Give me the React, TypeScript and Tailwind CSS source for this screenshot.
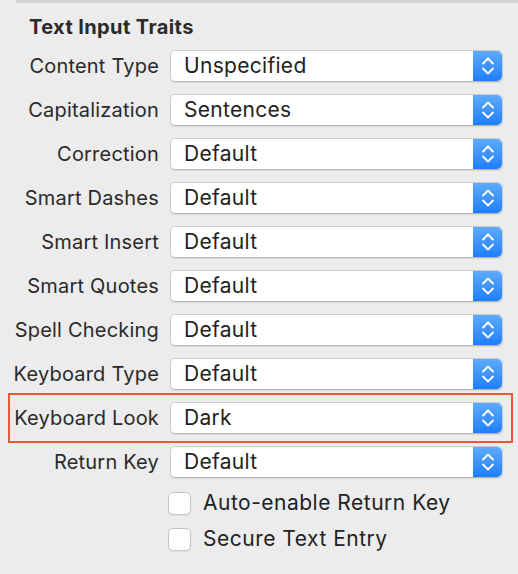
import React from 'react'

const rows: { label: string; value: string; marked?: boolean }[] = [
  { label: 'Content Type', value: 'Unspecified' },
  { label: 'Capitalization', value: 'Sentences' },
  { label: 'Correction', value: 'Default' },
  { label: 'Smart Dashes', value: 'Default' },
  { label: 'Smart Insert', value: 'Default' },
  { label: 'Smart Quotes', value: 'Default' },
  { label: 'Spell Checking', value: 'Default' },
  { label: 'Keyboard Type', value: 'Default' },
  { label: 'Keyboard Look', value: 'Dark', marked: true },
  { label: 'Return Key', value: 'Default' },
]

function Stepper() {
  return (
    <div className="w-[29px] h-full rounded-r-[5px] bg-gradient-to-b from-[#5eaafc] to-[#1b7ff9] flex items-center justify-center">
      <svg width="16" height="22" viewBox="0 0 16 22" fill="none">
        <path d="M3 8.5 L8 3.5 L13 8.5" stroke="white" strokeWidth="1.8" strokeLinecap="round" strokeLinejoin="round" />
        <path d="M3 13.5 L8 18.5 L13 13.5" stroke="white" strokeWidth="1.8" strokeLinecap="round" strokeLinejoin="round" />
      </svg>
    </div>
  )
}

function PopUp({ value }: { value: string }) {
  return (
    <div className="w-[333px] h-[32px] flex rounded-[5px] bg-white border border-[#cdcdcd] border-b-[#b5b5b5] shadow-[0_1px_1px_rgba(0,0,0,0.08)]">
      <div className="flex-1 flex items-center pl-[13px] text-[21px] tracking-[0.3px] text-[#222]">{value}</div>
      <Stepper />
    </div>
  )
}

function Check({ label }: { label: string }) {
  return (
    <div className="h-[36px] flex items-center pl-[168px] gap-[12px]">
      <div className="w-[23px] h-[23px] rounded-[5px] bg-white border border-[#c4c4c4] shadow-[0_1px_1px_rgba(0,0,0,0.06)]" />
      <span className="text-[21px] tracking-[0.5px] text-[#222]">{label}</span>
    </div>
  )
}

export default function App() {
  return (
    <div
      className="w-[518px] h-[574px] bg-[#ececec] overflow-hidden"
      style={{ fontFamily: 'Inter, "Liberation Sans", sans-serif' }}
    >
      <div className="ml-[16px] h-[3px] bg-[#d3d3d3]" />
      <div className="h-[41px] flex items-center pl-[29px] pt-[7px] text-[20px] tracking-[0.4px] font-bold text-[#2a2a2a]">
        Text Input Traits
      </div>
      {rows.map(r => (
        <div key={r.label} className="relative h-[44px] flex items-center">
          {r.marked && (
            <div className="absolute left-[8px] right-[5px] top-[-3px] bottom-[-3px] border-2 border-[#ef553a]" />
          )}
          <div className="w-[159px] text-right text-[20px] tracking-[0.2px] text-[#2a2a2a]">{r.label}</div>
          <div className="ml-[11px]">
            <PopUp value={r.value} />
          </div>
        </div>
      ))}
      <div className="h-[1px]" />
      <Check label="Auto-enable Return Key" />
      <Check label="Secure Text Entry" />
    </div>
  )
}
